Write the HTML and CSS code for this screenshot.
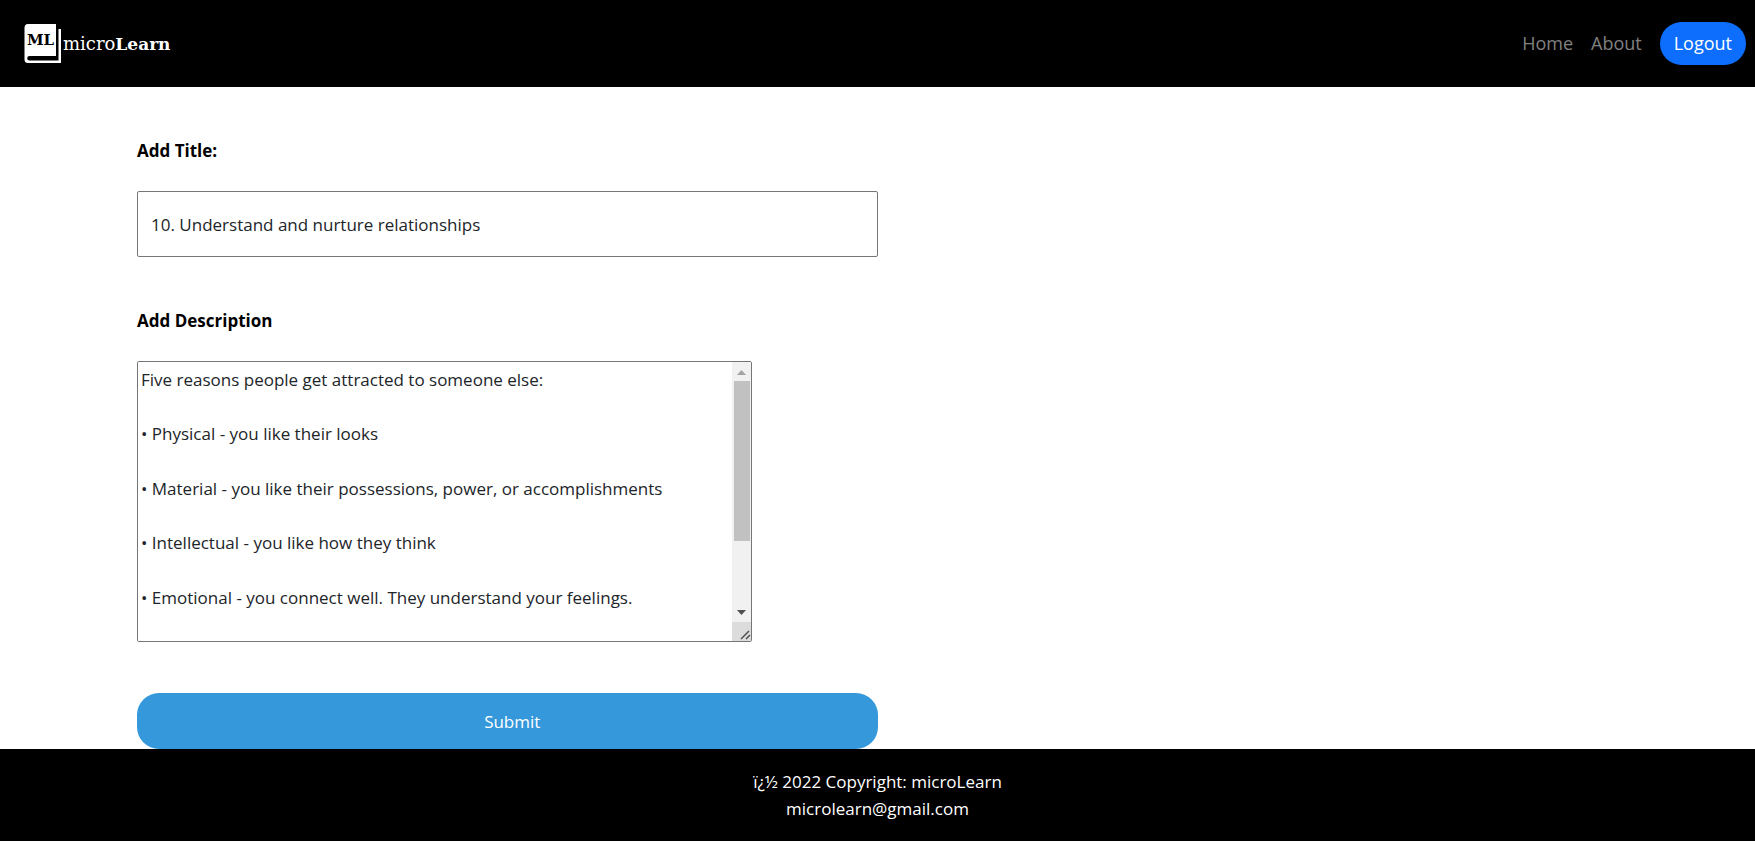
FILE: index.html
```html
<!DOCTYPE html>
<html lang="en">
<head>
<meta charset="utf-8">
<title>microLearn</title>
<link rel="stylesheet" href="styles.css">
</head>
<body>
<header class="navbar">
  <a class="brand" href="#" aria-label="microLearn">
    <svg class="logo" width="152" height="43" viewBox="0 0 152 43" aria-hidden="true">
      <path d="M6 2H34v32H7.500a2.200 2.200 0 0 0 0 4.600H36.500V7H39V41H6Q2.500 41 2.500 37.500V6Q2.500 2 6 2Z" fill="#fff"/>
      <text class="logo-mark" x="5" y="23" fill="#000">ML</text>
      <text class="logo-name" x="41" y="28" fill="#fff">micro<tspan class="logo-strong">Learn</tspan></text>
    </svg>
  </a>
  <nav class="nav-links">
    <a class="nav-link" href="#">Home</a>
    <a class="nav-link" href="#">About</a>
    <button class="logout" type="button">Logout</button>
  </nav>
</header>
<main class="page">
  <form class="form">
    <label class="label" for="title">Add Title:</label>
    <input class="title-input" id="title" type="text" value="10. Understand and nurture relationships">
    <label class="label" for="description">Add Description</label>
    <div class="description-box">
      <textarea class="description" id="description">Five reasons people get attracted to someone else:

• Physical - you like their looks

• Material - you like their possessions, power, or accomplishments

• Intellectual - you like how they think

• Emotional - you connect well. They understand your feelings.




</textarea>
      <div class="scrollbar" aria-hidden="true">
        <svg class="arrow" width="19" height="19" viewBox="0 0 19 19"><path d="M5 13L9.500 8L14 13Z" fill="#a3a3a3"/></svg>
        <div class="track"><div class="thumb"></div></div>
        <svg class="arrow" width="19" height="19" viewBox="0 0 19 19"><path d="M5 7L9.500 12L14 7Z" fill="#505050"/></svg>
        <svg class="grip" width="19" height="19" viewBox="0 0 19 19"><path d="M9 17L17 9M14 17L18 13" stroke="#505050" stroke-width="1.500"/></svg>
      </div>
    </div>
    <button class="submit" type="submit">Submit</button>
  </form>
</main>
<footer class="footer">
  <div>ï¿½ 2022 Copyright: microLearn</div>
  <div>microlearn@gmail.com</div>
</footer>
</body>
</html>
```
FILE: styles.css
```css
* { box-sizing: border-box; }

body {
  margin: 0;
  background: #fff;
  color: #212529;
  font-family: "Segoe UI", "Open Sans", "Noto Sans", sans-serif;
  font-size: 17px;
  line-height: 27px;
}

button, input, textarea { font: inherit; color: inherit; }

.navbar {
  display: flex;
  align-items: center;
  justify-content: space-between;
  padding: 22px 9px 22px 22px;
  background: #000;
}

.brand { display: flex; }
.logo { display: block; }
.logo-mark { font: bold 15px "DejaVu Serif", serif; }
.logo-name { font: 18px "DejaVu Serif", serif; }
.logo-strong { font-size: 17px; font-weight: bold; }

.nav-links {
  display: flex;
  align-items: center;
  gap: 18px;
  font-size: 18px;
}
.nav-link { color: #808080; text-decoration: none; }

.logout {
  padding: 8px 14px;
  border: 0;
  border-radius: 22px;
  background: #0d6efd;
  color: #fff;
}

.page { padding: 0 137px; }

.form {
  display: flex;
  flex-direction: column;
  align-items: flex-start;
  width: 50%;
}

.label {
  margin: 50px 0 27px;
  color: #000;
  font-weight: bold;
}

.title-input {
  width: 100%;
  height: 66px;
  padding: 0 13px;
  border: 1px solid #767676;
  border-radius: 2px;
  background: #fff;
}

.description-box {
  position: relative;
  width: 83%;
}

.description {
  display: block;
  width: 100%;
  height: 281px;
  padding: 4px 22px 3px 3px;
  border: 1px solid #767676;
  border-radius: 2px;
  background: #fff;
  line-height: 1.6;
  resize: none;
}

.scrollbar {
  position: absolute;
  top: 1px;
  right: 1px;
  bottom: 1px;
  display: flex;
  flex-direction: column;
  width: 19px;
  background: #f1f1f1;
  pointer-events: none;
}
.track { flex: 1; padding: 0 1px 0 2px; }
.thumb { height: 72%; background: #c1c1c1; }
.grip { background: #dcdcdc; }

.submit {
  width: 100%;
  height: 56px;
  margin-top: 51px;
  padding: 0 10px 0 20px;
  border: 0;
  border-radius: 22px;
  background: #3498db;
  color: #fff;
}

.footer {
  padding: 19px 0;
  background: #000;
  color: #fff;
  text-align: center;
}
```
